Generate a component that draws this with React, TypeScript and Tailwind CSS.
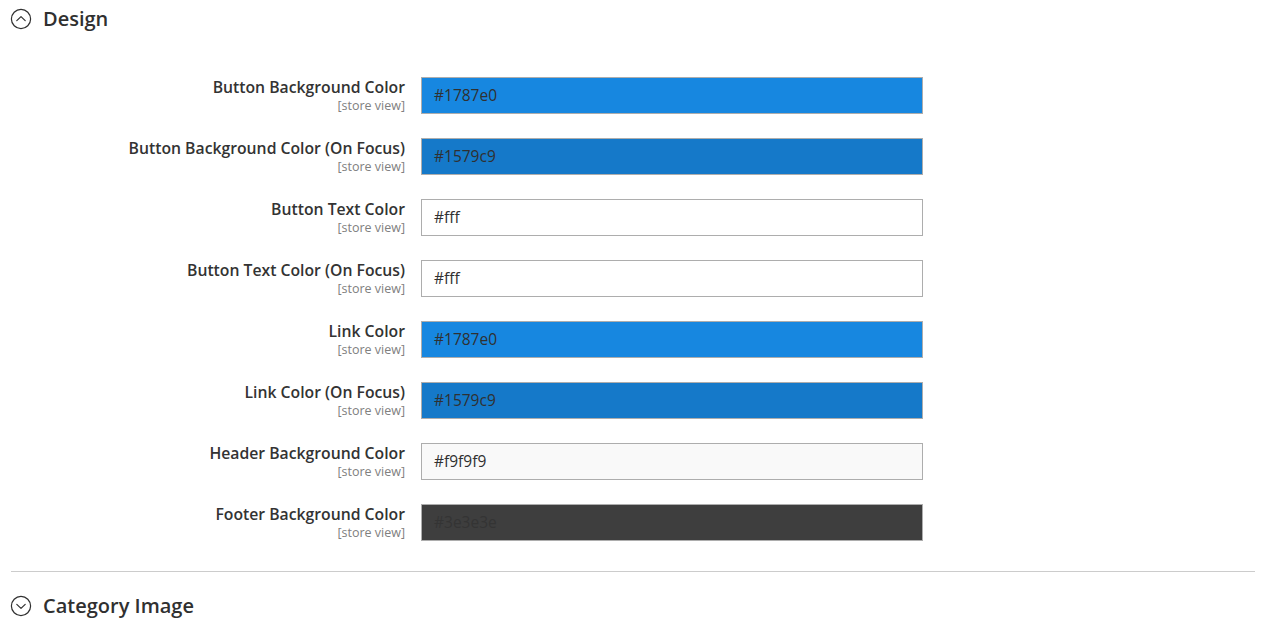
import React from "react";

type Field = { label: string; value: string; bg: string; text: string };

const fields: Field[] = [
  { label: "Button Background Color", value: "#1787e0", bg: "bg-[#1787e0]", text: "text-[#303030]" },
  { label: "Button Background Color (On Focus)", value: "#1579c9", bg: "bg-[#1579c9]", text: "text-[#303030]" },
  { label: "Button Text Color", value: "#fff", bg: "bg-[#ffffff]", text: "text-[#303030]" },
  { label: "Button Text Color (On Focus)", value: "#fff", bg: "bg-[#ffffff]", text: "text-[#303030]" },
  { label: "Link Color", value: "#1787e0", bg: "bg-[#1787e0]", text: "text-[#303030]" },
  { label: "Link Color (On Focus)", value: "#1579c9", bg: "bg-[#1579c9]", text: "text-[#303030]" },
  { label: "Header Background Color", value: "#f9f9f9", bg: "bg-[#f9f9f9]", text: "text-[#303030]" },
  { label: "Footer Background Color", value: "#3e3e3e", bg: "bg-[#3e3e3e]", text: "text-[#343434]" },
];

function ToggleIcon({ open }: { open: boolean }) {
  return (
    <svg width="22" height="22" viewBox="0 0 22 22" fill="none" stroke="#303030" strokeWidth="1.2">
      <circle cx="11" cy="11" r="9.6" />
      {open ? (
        <path d="M6.8 12.6 L11 8.6 L15.2 12.6" strokeLinecap="round" strokeLinejoin="round" />
      ) : (
        <path d="M6.8 9.4 L11 13.4 L15.2 9.4" strokeLinecap="round" strokeLinejoin="round" />
      )}
    </svg>
  );
}

export default function App() {
  return (
    <div className="w-[1265px] h-[634px] bg-white overflow-hidden pl-[10px] pr-[10px] font-['Open_Sans',sans-serif] text-[#303030]">
      {/* Design section header */}
      <div className="flex items-center gap-[11px] h-[38px]">
        <ToggleIcon open />
        <span className="text-[20px] font-semibold leading-none">Design</span>
      </div>

      {/* Fields */}
      <div className="flex flex-col gap-[24px] mt-[39px]">
        {fields.map((f) => (
          <div key={f.label} className="flex gap-[16px]">
            <div className="w-[395px] flex flex-col items-end">
              <span className="text-[15.75px] font-semibold leading-[21px] text-[#333333]">{f.label}</span>
              <span className="text-[12.5px] text-[#808080] leading-[15px]">[store view]</span>
            </div>
            <div
              className={`w-[502px] h-[37px] border border-[#adadad] ${f.bg} flex items-center pl-[12px] text-[15.5px] ${f.text}`}
            >
              {f.value}
            </div>
          </div>
        ))}
      </div>

      <div className="mt-[30px] ml-[1px] border-t border-[#cccccc]" />

      {/* Category Image section header */}
      <div className="flex items-center gap-[11px] h-[68px]">
        <ToggleIcon open={false} />
        <span className="text-[20px] font-semibold leading-none">Category Image</span>
      </div>
    </div>
  );
}
